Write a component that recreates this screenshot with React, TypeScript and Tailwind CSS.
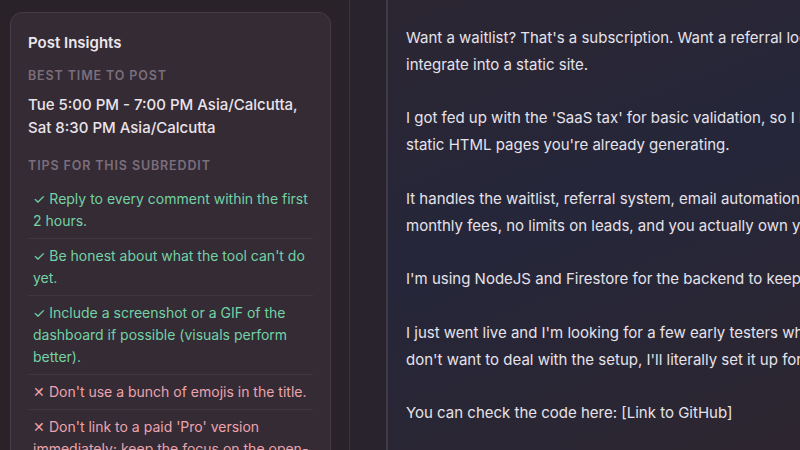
import React from "react";

const tips = [
  { ok: true, text: "Reply to every comment within the first 2 hours." },
  { ok: true, text: "Be honest about what the tool can't do yet." },
  { ok: true, text: "Include a screenshot or a GIF of the dashboard if possible (visuals perform better)." },
  { ok: false, text: "Don't use a bunch of emojis in the title." },
  { ok: false, text: "Don't link to a paid 'Pro' version immediately; keep the focus on the open-source aspect." },
];

const body = `Want a waitlist? That's a subscription. Want a referral loop? That's another one, and it's a pain to
integrate into a static site.

I got fed up with the 'SaaS tax' for basic validation, so I built an open-source tool that plugs into
static HTML pages you're already generating.

It handles the waitlist, referral system, email automation and analytics all in one place. No
monthly fees, no limits on leads, and you actually own your data.

I'm using NodeJS and Firestore for the backend to keep it light and easy to self-host.

I just went live and I'm looking for a few early testers who want to try it on their own projects. If you
don't want to deal with the setup, I'll literally set it up for you for free.

You can check the code here: [Link to GitHub]`;

export default function App() {
  return (
    <div
      className="flex h-[450px] w-[800px] overflow-hidden bg-[#2a2229]"
      style={{ fontFamily: "Inter, 'Noto Sans', sans-serif" }}
    >
      <aside className="w-[349px] shrink-0 pl-[10px] pr-[18px] pt-[12px]">
        <div className="h-[460px] rounded-[12px] border border-[#463c47] bg-[#342b34] px-[17px] pt-[19px]">
          <h2 className="text-[15px] font-semibold leading-[22px] text-[#ece6ec]">Post Insights</h2>
          <div className="mt-[13px] text-[12.5px] font-semibold uppercase leading-[18px] tracking-[0.07em] text-[#7b6e7c]">
            Best time to post
          </div>
          <p className="mt-[8px] text-[15px] font-medium leading-[23px] text-[#ebe3ea]">
            Tue 5:00 PM - 7:00 PM Asia/Calcutta,
            <br />
            Sat 8:30 PM Asia/Calcutta
          </p>
          <div className="mt-[18px] text-[12.5px] font-semibold uppercase leading-[18px] tracking-[0.07em] text-[#7b6e7c]">
            Tips for this subreddit
          </div>
          <ul className="mt-[7px]">
            {tips.map((t, i) => (
              <li
                key={i}
                className={`border-b border-[#3f3640] py-[6px] pl-[5px] pr-0 text-[14px] leading-[22px] ${
                  t.ok ? "text-[#73d2a6]" : "text-[#eba4ae]"
                }`}
              >
                {t.ok ? "✓ " : "✕ "}
                {t.text}
              </li>
            ))}
          </ul>
        </div>
      </aside>
      <div className="w-[37px] shrink-0 border-l border-[#3a3340] bg-[#28232c]" />
      <main className="flex-1 overflow-hidden border-l-2 border-[#403a46] bg-[linear-gradient(160deg,#2c2632_0%,#25263a_45%,#2d2630_100%)] pl-[18px] pt-[25px]">
        <div className="whitespace-pre text-[15px] leading-[26.8px] text-[#e6e2ea]">{body}</div>
      </main>
    </div>
  );
}
